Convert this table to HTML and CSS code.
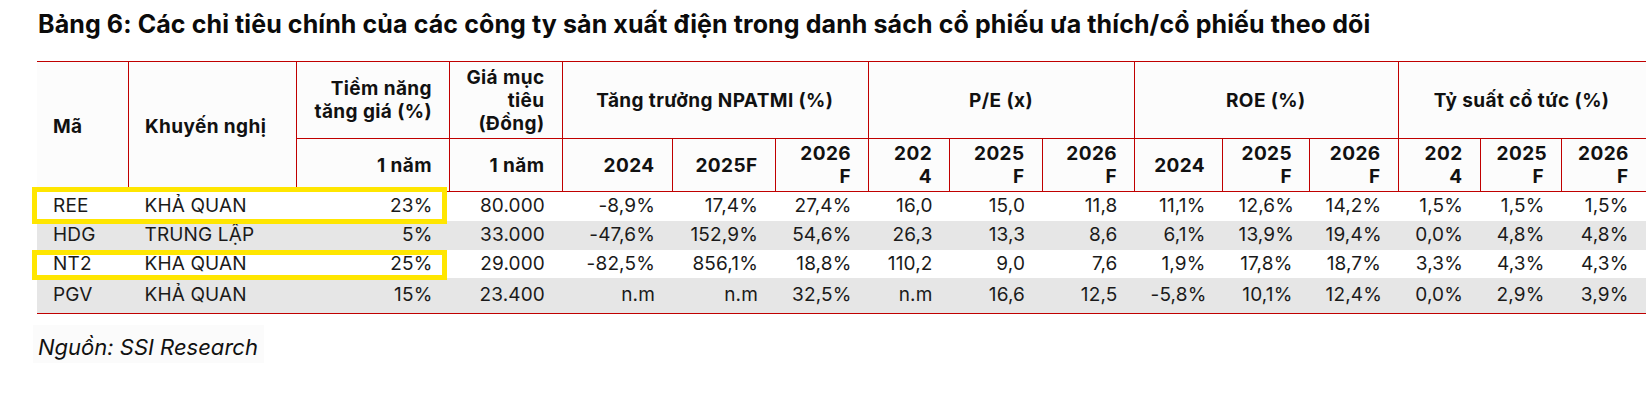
FILE: index.html
```html
<!DOCTYPE html>
<html lang="vi">
<head>
<meta charset="utf-8">
<title>Bảng 6</title>
<link rel="stylesheet" href="styles.css">
</head>
<body>
<div class="page">
  <h1 class="title">Bảng 6: Các chỉ tiêu chính của các công ty sản xuất điện trong danh sách cổ phiếu ưa thích/cổ phiếu theo dõi</h1>
  <div class="table-wrap">
    <table class="data">
      <colgroup>
        <col class="w-ma"><col class="w-kn"><col class="w-tn"><col class="w-gia">
        <col class="w-g1"><col class="w-g2"><col class="w-g3">
        <col class="w-p1"><col class="w-p2"><col class="w-p3">
        <col class="w-r1"><col class="w-r2"><col class="w-r3">
        <col class="w-t1"><col class="w-t2"><col class="w-t3">
      </colgroup>
      <thead>
        <tr class="h1">
          <th rowspan="2" class="l">Mã</th>
          <th rowspan="2" class="l">Khuyến nghị</th>
          <th class="r">Tiềm năng<br>tăng giá (%)</th>
          <th class="r">Giá mục<br>tiêu<br>(Đồng)</th>
          <th colspan="3" class="c">Tăng trưởng NPATMI (%)</th>
          <th colspan="3" class="c">P/E (x)</th>
          <th colspan="3" class="c">ROE (%)</th>
          <th colspan="3" class="c last">Tỷ suất cổ tức (%)</th>
        </tr>
        <tr class="h2">
          <th class="r">1 năm</th>
          <th class="r">1 năm</th>
          <th class="r">2024</th>
          <th class="r">2025F</th>
          <th class="r">2026<br>F</th>
          <th class="r">202<br>4</th>
          <th class="r">2025<br>F</th>
          <th class="r">2026<br>F</th>
          <th class="r">2024</th>
          <th class="r">2025<br>F</th>
          <th class="r">2026<br>F</th>
          <th class="r">202<br>4</th>
          <th class="r">2025<br>F</th>
          <th class="r last">2026<br>F</th>
        </tr>
      </thead>
      <tbody>
        <tr class="row-a">
          <td class="l">REE</td><td class="l">KHẢ QUAN</td><td>23%</td><td>80.000</td>
          <td>-8,9%</td><td>17,4%</td><td>27,4%</td>
          <td>16,0</td><td>15,0</td><td>11,8</td>
          <td>11,1%</td><td>12,6%</td><td>14,2%</td>
          <td>1,5%</td><td>1,5%</td><td>1,5%</td>
        </tr>
        <tr class="row-b shade">
          <td class="l">HDG</td><td class="l">TRUNG LẬP</td><td>5%</td><td>33.000</td>
          <td>-47,6%</td><td>152,9%</td><td>54,6%</td>
          <td>26,3</td><td>13,3</td><td>8,6</td>
          <td>6,1%</td><td>13,9%</td><td>19,4%</td>
          <td>0,0%</td><td>4,8%</td><td>4,8%</td>
        </tr>
        <tr class="row-c">
          <td class="l">NT2</td><td class="l">KHẢ QUAN</td><td>25%</td><td>29.000</td>
          <td>-82,5%</td><td>856,1%</td><td>18,8%</td>
          <td>110,2</td><td>9,0</td><td>7,6</td>
          <td>1,9%</td><td>17,8%</td><td>18,7%</td>
          <td>3,3%</td><td>4,3%</td><td>4,3%</td>
        </tr>
        <tr class="row-d shade">
          <td class="l">PGV</td><td class="l">KHẢ QUAN</td><td>15%</td><td>23.400</td>
          <td>n.m</td><td>n.m</td><td>32,5%</td>
          <td>n.m</td><td>16,6</td><td>12,5</td>
          <td>-5,8%</td><td>10,1%</td><td>12,4%</td>
          <td>0,0%</td><td>2,9%</td><td>3,9%</td>
        </tr>
      </tbody>
    </table>
    <div class="mark mark-1"></div>
    <div class="mark mark-2"></div>
  </div>
  <p class="source"><span class="source-text">Nguồn: SSI Research</span></p>
</div>
</body>
</html>
```

FILE: styles.css
```css
html, body {
  margin: 0;
  padding: 0;
  background: #ffffff;
}

body {
  font-family: "Inter", "Liberation Sans", sans-serif;
  color: #111111;
}

.page {
  padding: 9px 0 0 37px;
}

.title {
  margin: 0 0 22px 1px;
  font-size: 25px;
  line-height: 30px;
  letter-spacing: 0.1px;
  font-weight: 700;
  color: #0b0b0b;
  white-space: nowrap;
}

.table-wrap {
  position: relative;
  width: 1608.5px;
}

.data {
  border-collapse: collapse;
  table-layout: fixed;
  width: 1608.5px;
  font-size: 19px;
}

.w-ma { width: 91.5px; }
.w-kn { width: 168px; }
.w-tn { width: 153px; }
.w-gia { width: 112.5px; }
.w-g1 { width: 110px; }
.w-g2 { width: 103px; }
.w-g3 { width: 93.5px; }
.w-p1 { width: 81px; }
.w-p2 { width: 92.5px; }
.w-p3 { width: 92.5px; }
.w-r1 { width: 88px; }
.w-r2 { width: 87px; }
.w-r3 { width: 88.5px; }
.w-t1 { width: 82px; }
.w-t2 { width: 81.5px; }
.w-t3 { width: 84px; }

.data thead {
  background: #fcfcfc;
}

.data th {
  font-weight: 700;
  line-height: 23px;
  letter-spacing: 0.4px;
  padding: 0 17px 0 16px;
  vertical-align: middle;
  border-right: 1px solid #c00000;
  border-bottom: 1px solid #c00000;
  color: #111111;
  white-space: nowrap;
}

.data th.last {
  border-right: none;
}

.data .h1 th {
  border-top: 1px solid #c00000;
}

.data tr.h1 {
  height: 77px;
}

.data tr.h2 {
  height: 53px;
}

.data td {
  padding: 0 17px 0 16px;
  text-align: right;
  line-height: 22px;
  letter-spacing: 0.15px;
  vertical-align: middle;
  white-space: nowrap;
  color: #1a1a1a;
}

.data .l { text-align: left; }
.data .r { text-align: right; }
.data .c { text-align: center; }

.data tr.row-a { height: 29px; }
.data tr.row-b { height: 29px; }
.data tr.row-c { height: 28px; }
.data tr.row-d { height: 36px; }

.data tr.shade td {
  background: #e6e6e6;
}

.data tr.row-d td {
  border-bottom: 1px solid #c00000;
}

.mark {
  position: absolute;
  left: -5px;
  width: 415px;
  box-sizing: border-box;
  border: 5px solid #ffe600;
  pointer-events: none;
}

.mark-1 {
  top: 126px;
  height: 37px;
}

.mark-2 {
  top: 189px;
  height: 30px;
}

.source {
  margin: 11px 0 0 -4px;
}

.source-text {
  display: inline-block;
  background: #fbfbfb;
  padding: 9px 6px 3px 5px;
  font-size: 22px;
  line-height: 26px;
  font-style: italic;
  color: #111111;
}
```
